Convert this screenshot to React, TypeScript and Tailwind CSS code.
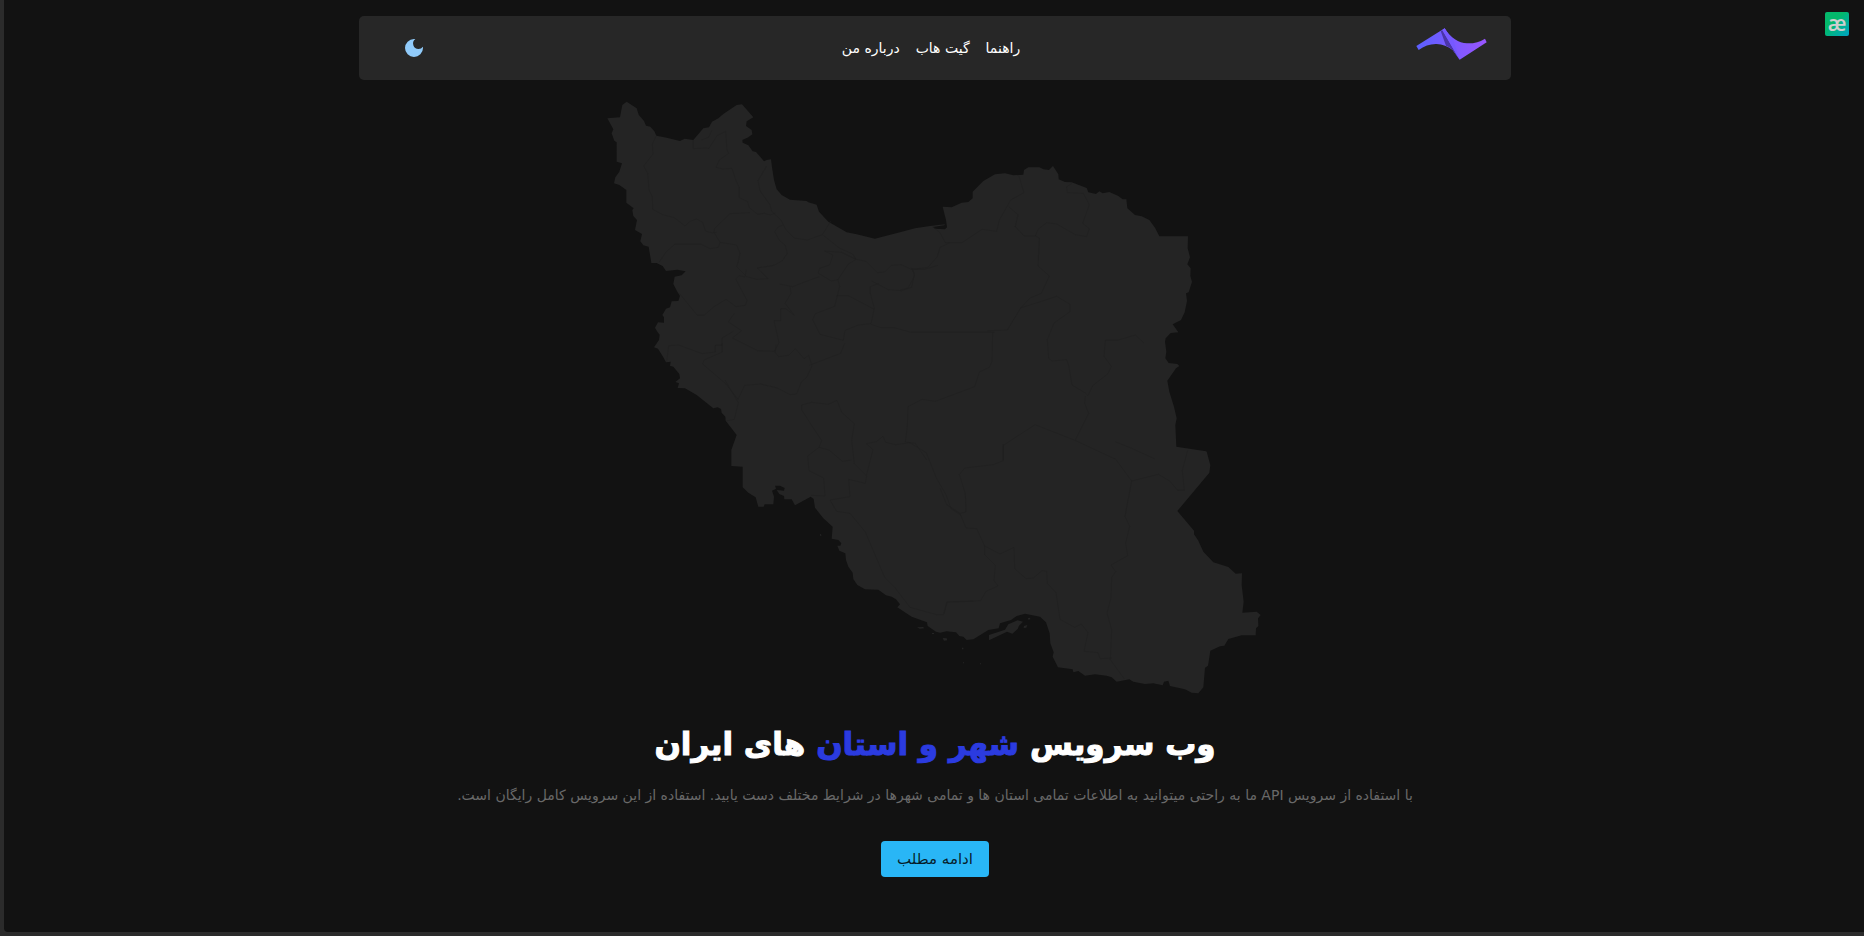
import { useState } from "react";

type Sheet = { dx: number; dy: number; points: string };

const border: Sheet[] = [
  {
    dx: 0,
    dy: 0,
    points:
      "110,65 140,85 146,104 162,123 168,137 181,140 193,154 199,167 230,173 270,183 284,176 310,180 340,145 357,142 366,125 385,115 400,102 440,75 456,73 490,112 470,124 468,138 485,150 487,163 475,172 457,180 458,188 475,196 488,214 498,216 522,244 530,240 543,238 546,262 552,300 560,328 575,345 600,359 650,363 655,367 680,374 687,395 715,425 770,457 800,463 855,476 895,466",
  },
  {
    dx: 930,
    dy: 180,
    points:
      "0,277 45,265 90,258 135,253 133,256 98,261 104,266 135,268 141,262 138,240 128,200 155,202 185,188 205,186 218,175 218,155 250,123 285,103 315,100 340,106 370,104 372,90 385,82 418,82 430,88 447,90 459,78 475,103 476,118 495,126 515,127 560,144 565,157 588,162 598,154 608,160 628,156 655,168 668,178 679,178 682,205 705,225 725,229 748,240 765,263 778,289 864,289 863,325 870,352 862,373 872,385 871,408 876,425 866,457 858,460 861,483 854,517 843,540 818,553 835,577 812,579 797,595 795,605 799,635 796,655 806,669 832,672 838,678 828,685 802,722 808,755 822,800 830,835 826,855 829,920 918,934",
  },
  {
    dx: 1050,
    dy: 960,
    points:
      "800,155 811,195 808,218 712,333 762,392 762,403 775,422 790,455 820,487 865,501 887,521 906,520 905,555 911,605 907,638 950,635 962,645 954,655 955,678 948,685 947,706 905,706 865,717 853,737 840,739 811,752 804,797 795,803 790,862 775,880 755,878 735,868 690,858 685,842 672,845 668,856 640,850 615,852 580,845 568,838 530,845 515,832 500,827 465,823 435,827 415,813 400,817 398,808 354,802 338,770 341,757 331,730 329,700 318,667 300,650 255,641 230,648 213,660 180,670 176,685 145,690 100,718 80,720 70,710 58,708 48,697 20,694",
  },
  {
    dx: 150,
    dy: 900,
    points:
      "900,758 888,755 863,738 861,727 815,710 772,682 780,673 768,658 755,650 738,646 715,629 675,628 652,615 640,597 638,578 625,560 618,540 616,520 598,512 592,497 601,497 604,490 595,480 575,476 578,440 550,415 525,383 521,357 512,350 465,376 455,358 433,358 432,348 418,342 410,330 432,332 434,324 420,317 405,317 408,326 396,332 402,350 400,373 374,373 371,380 355,380 347,352 325,338 308,322 308,260 274,258 274,210 290,165 257,122 256,110 245,98 243,87 233,82 220,85 170,45 135,25",
  },
  {
    dx: 0,
    dy: 0,
    points:
      "263,924 267,910 256,906 270,895 268,882 250,860 240,857 242,845 228,847 220,832 204,806 192,802 207,780 209,764 203,757 195,743 204,727 222,728 222,712 217,705 228,686 240,682 245,664 265,663 270,648 262,635 250,612 254,590 275,586 287,574 262,569 228,573 218,558 200,549 184,549 176,500 160,496 151,484 156,462 135,450 141,420 130,408 127,390 131,385 109,368 109,330 88,315 72,310 76,292 88,275 96,250 80,245 80,187 73,182 65,160 70,148 52,115 90,112 97,75",
  },
];

const outline = border
  .map(({ dx, dy, points }) =>
    points
      .split(" ")
      .map((pair) => {
        const [x, y] = pair.split(",").map(Number);
        return `${x + dx},${y + dy}`;
      })
      .join(" "),
  )
  .join(" ");

function IranMap() {
  return (
    <svg viewBox="3 0 2064 1848" className="w-full max-w-[688px]" role="img" aria-label="نقشه ایران">
      <polygon points={outline} fill="#242424" />
      <g fill="#242424">
        <path d="M1197 1665l48-16 10-16 28-12 16 4-12 12-4 10-16 14-16-6-54 26zM1302 1638l10-3-3 8-8 1zM1314 1614l6-1 1 5-6 1zM981 1642l18-1 4 4-14 1zM1058 1674l12 1 2 6-10 1zM1116 1703h4v5h-4zM1119 1747h3v3h-3zM1170 1750h3v3h-3zM690 1363l3-2 1 7h-3zM1026 1659h6v3h-6z" />
      </g>
      <g fill="none" stroke="#202020" strokeWidth="2" strokeLinejoin="round">
        <path d="M199 167l-12 25 2 30-28 36 12 22 4 50 10 20 1 38 30 16 35 9 32 25 15-14 20-7 18 10 8 26 22 6 12-2M310 180l0 26 35-2 12 1 24-38 26-13 4 56 5 10-28 20-10 22 20 5 28-2 10 32 12 26 0 30 25 12 5 18 25 20 20-3 18 5 15-6M366 150l-10 22-22 8M530 258l-26 44 6 30 30 42 5 20 28 26 14 28 25 26 40 6 45-16 25-40M390 487l-18-30 2-12 46-44 60-3M207 547l22-32 25-22h80l26 13 25-4 5-15 50 8 10 25-6 28-4 12 30 30 30 8 34-2-32-32 50-8 25-14 15-22-6-24-18-15-14-26 10-14 14-5M700 466l48 38 40 18 10 16 30 6 34 34 22-2 20-20 30-2 30 14 40 0 40-12M798 538l-24 15-30 46-20 4-40-24 5-14 30-10 10-30-25-12 50 4zM744 599l5 20-15 60-58 22-8 18 22 44 70 18 5-30 40-16 38-4 10-46-12-45 0-20 26-10M740 647h35l76 40M845 603l50 26 40 3 30-10 8-40-10-20M843 733l30 10h40l50 14h250M268 640l54 66h20l30-26 36-22 30 22 28-4 5-15-34-64 10-10 18 4 4-22M600 620l3 20-18 30 28 36-26-20h-15l0 36h-20l15 66-14 26-50-2-76-38 28-22-40-26 18-26M568 612l40 8 30-12 50-18M230 845l6-48 30-2 70 26 40-5v-20h20v-22l34-20M397 790v26l-55 24-4 12 70 60 36 46 20-42 48-4 50 12 38 20 20-2 14-36 16-14 16-34-10-32-14 10-26-30-20 20-30 4-10-12 2-24M658 856l94-36 12-30" />
        <g transform="translate(930 180)">
          <path d="M356 106l16 52-40 22-34 60-8 34-44-6-60 40-50 0-16-30-22-18M150 308l-30 14-8 28-28 32-46 6 6 20-20 36-24 6M326 200l28 24-8 36 26 28h34l8-20 26-20 30 4 56 32 34 6 8-24-20-16 20-56-18-34-48-2-2-18 16-10M406 288l12 6-4 84 34 30-24 52-34 14-28 30-40 66-60 2M362 504l108-35 40 24v22l-48 34-20 50 4 56 10 8 44-4 6 16 10 60 40 24 8 8 14-30 46-36 10-22-22-30 4-48 36 0 54-16 26 24M556 768l-2 22 12 30-40 80M278 576l-2 88-8 18-30 14-14 44-118 44-40-6-42 22-2 60-6 46 30 4 34 50M310 960v-44l95-62 120 47 120 56" />
        </g>
        <g transform="translate(1050 960)">
          <path d="M645 177l-70-32-50-20M525 175l50 68-20 106 14 30-12 50 6 38-50 28 14 20-12 18-2 60-12 46 14 50-4 90 42 58M575 243l80-20 34 20 24 28h20l-6-60 16-60M190 132v50l-30 12-86 10-16 20 18 56 2 56-18 4-40-26-20-50M60 340l18 44 32 2 24 52v26l32 32-4 46 12 16-36 16-16 28-100 4-10 36M134 438l46 24 42-20 2 64 34 30 22-2 26-22 14 2 2 36 26 28 12 80 44 24 20-10 20 26-12 56 42 4 6 18 36-2" />
        </g>
        <g transform="translate(150 900)">
          <path d="M255 0l40 68-12 50-25 5M485 75l30-8 50 6 26-12 14 36 38 34-8 50 8 70 36 36 20-78-20-18 30-6 20-16 8 18 30 7 42-6 50 30 30 76 30 52 14 40 30 20M485 75v15l60 92-8 20-34 26 4 44 44 22 4 54-42-2M537 202l30 8 40 34 28-4M680 288l-4 22-50-12 4 52-60 10 20 34 40 6 46 56 58 136 30 30 46 60 80 22h20l10-38 80-2" />
        </g>
      </g>
    </svg>
  );
}

function Logo() {
  return (
    <svg viewBox="0 0 213 96" className="h-8 w-[71px]" role="img" aria-label="لوگو">
      <defs>
        <linearGradient id="wing" x1="0" x2="1">
          <stop offset="0" stopColor="#5b5fff" />
          <stop offset="1" stopColor="#9a55ff" />
        </linearGradient>
      </defs>
      <path
        d="M1 54L86 1C104 30 128 45 153 46Q184 47 207 32L212 43L131 95L110 66Q88 49 62 48Q33 47 8 66Z"
        fill="url(#wing)"
      />
      <path d="M74 9L79 7L131 95L110 66Q101 57 90 53Z" fill="#4a35a8" />
      <path d="M79 6L86 1Q97 20 110 31L131 95Z" fill="#7659ff" />
    </svg>
  );
}

const links = ["راهنما", "گیت هاب", "درباره من"];

export default function App() {
  const [dark, setDark] = useState(true);

  return (
    <div dir="rtl" className="min-h-screen bg-[#2b2b2b] pb-1 pl-1 font-['DejaVu_Sans',sans-serif]">
      <div className="relative min-h-[calc(100vh-4px)] rounded-bl-sm bg-[#121212] pt-4 pr-4 pl-[18px]">
        <div
          dir="ltr"
          className="absolute top-3 right-[15px] flex size-6 items-center justify-center rounded-[2px] bg-linear-to-br from-[#04b86c] from-40% to-[#02a3c4] font-['Open_Sans',sans-serif] text-[21px] leading-none font-semibold text-[#cfcfcf]"
        >
          <span className="-mt-0.5">æ</span>
        </div>

        <header className="mx-auto grid h-16 max-w-[1152px] grid-cols-[1fr_auto_1fr] items-center rounded-[5px] bg-[#272727] pr-6 pl-4">
          <a href="#home" className="-mt-2 justify-self-start">
            <Logo />
          </a>
          <nav className="flex gap-4 text-sm text-white">
            {links.map((label) => (
              <a key={label} href="#link">
                {label}
              </a>
            ))}
          </nav>
          <button
            type="button"
            aria-label="تغییر پوسته"
            aria-pressed={dark}
            onClick={() => setDark(!dark)}
            className="ml-6 flex size-[30px] items-center justify-center justify-self-end"
          >
            <svg viewBox="0 0 24 24" className="size-6" fill="#90caf9">
              <path d="M12 3a9 9 0 1 0 9 9c0-.46-.04-.92-.1-1.36a5.389 5.389 0 0 1-4.4 2.26 5.403 5.403 0 0 1-3.14-9.8c-.44-.06-.9-.1-1.36-.1z" />
            </svg>
          </button>
        </header>

        <main className="flex flex-col items-center text-center">
          <IranMap />
          <h1 className="mt-6 text-[31px] leading-[48px] font-bold text-white [-webkit-text-stroke:1px_currentColor]">
            وب سرویس <span className="text-[#2b3be0]">شهر و استان</span> های ایران
          </h1>
          <p className="mt-[15px] text-sm leading-6 text-[#696969]">
            با استفاده از سرویس API ما به راحتی میتوانید به اطلاعات تمامی استان ها و تمامی شهرها در شرایط مختلف دست
            یابید. استفاده از این سرویس کامل رایگان است.
          </p>
          <button type="button" className="mt-[34px] h-9 rounded bg-[#29b6f6] px-4 text-[15px] text-black/85">
            ادامه مطلب
          </button>
        </main>
      </div>
    </div>
  );
}
